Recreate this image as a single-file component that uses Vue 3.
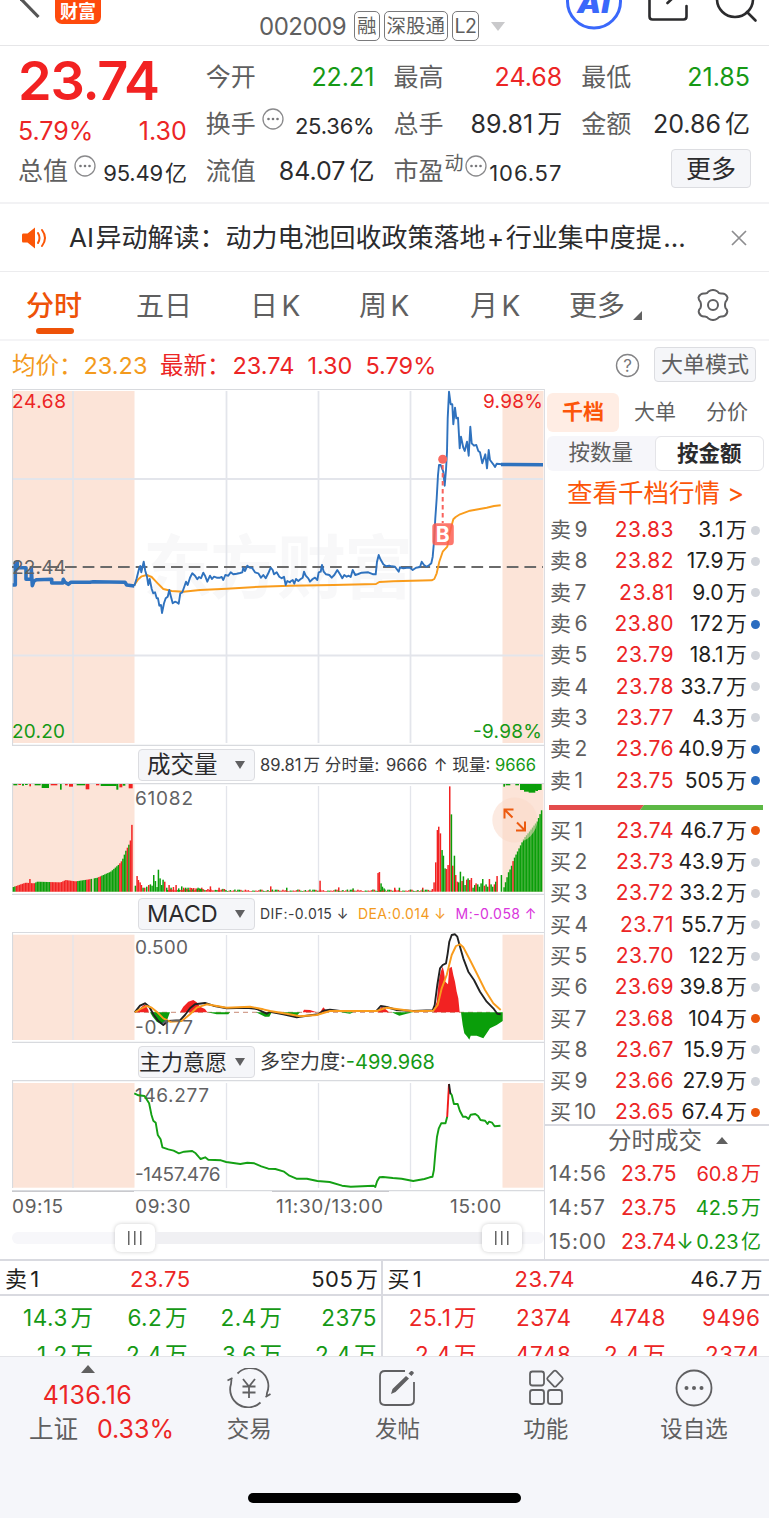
<template>
  <div class="app">
    <header class="top">
      <svg class="back" width="22" height="45" viewBox="20 0 22 45"><path d="M19 -3 L38.500 17" /></svg>
      <div class="logo">财富</div>
      <div class="code">
        <span class="num">002009</span>
        <i class="tag">融</i><i class="tag">深股通</i><i class="tag l2">L2</i>
        <svg width="14" height="9"><path d="M0 0H14L7 9Z" fill="#c9c9cb" /></svg>
      </div>
      <svg class="tools" width="206" height="45" viewBox="563 0 206 45">
        <circle cx="594" cy="1.5" r="26.5" stroke="#3a68fb" stroke-width="3" />
        <text x="577" y="12.500" class="ai" textLength="33" lengthAdjust="spacingAndGlyphs">AI</text>
        <path d="M649.500 -4V16.500Q649.500 19.500 652.500 19.500H683.500Q686.500 19.500 686.500 16.500V6M667.500 3L675 -4" />
        <circle cx="735" cy="-1" r="18" />
        <path d="M747 12L755.500 20.500" />
      </svg>
    </header>

    <section class="quote">
      <div class="first">
        <div class="price">23.74</div>
        <div class="pair chg"><span>5.79%</span><span>1.30</span></div>
        <div class="pair small-row">
          <span class="lab">总值<Dots class="sup" /></span><b class="sm"><Mix t="95.49亿" /></b>
        </div>
      </div>
      <div v-for="(c, i) in stats" :key="i" class="stat">
        <div v-for="s in c" :key="s.k" class="pair">
          <span class="lab">{{ s.k }}<em v-if="s.sup">{{ s.sup }}</em><Dots v-if="s.dots" class="sup" /></span>
          <b :class="[s.c, { sm: s.dots, pe: s.sup }]"><Mix :t="s.v" /></b>
        </div>
        <button v-if="i === 2" class="more">更多</button>
      </div>
    </section>

    <section class="news">
      <svg width="26" height="22" viewBox="0 0 26 22">
        <path d="M1 6.500H5.500L13 .5V21.500L5.500 15.500H1Q0 15.500 0 14V8Q0 6.500 1 6.500Z" fill="#fb5607" />
        <path d="M16 6Q19 11 16 16M20 3Q26 11 20 19" fill="none" stroke="#fb5607" stroke-width="2" stroke-linecap="round" />
      </svg>
      <p><Mix t="AI异动解读：动力电池回收政策落地+行业集中度提..." /></p>
      <svg class="x" width="16" height="16"><path d="M1 1L15 15M15 1L1 15" stroke="#8d8d8f" stroke-width="1.700" /></svg>
    </section>

    <nav class="tabs">
      <span class="on">分时</span><span>五日</span><span><Mix t="日K" /></span><span><Mix t="周K" /></span><span><Mix t="月K" /></span>
      <span>更多<svg width="9" height="9"><path d="M9 0V9H0Z" fill="#626262" /></svg></span>
      <svg class="gear" width="34" height="32" viewBox="-17 -16 34 32">
        <path d="M-4.500 -13.500Q-6 -11 -9 -11.500Q-13 -11.500 -14.500 -7.500Q-14.500 -5 -12.500 -3Q-11.500 0 -12.500 3Q-15 5 -14 8Q-12.500 11.500 -9 11.500Q-6 11 -4.500 13.500Q0 16.500 4.500 13.500Q6 11 9 11.500Q12.500 11.500 14 8Q15 5 12.500 3Q11.500 0 12.500 -3Q14.500 -5 14.500 -7.500Q13 -11.500 9 -11.500Q6 -11 4.500 -13.500Q0 -16.500 -4.500 -13.500Z" />
        <circle r="5" />
      </svg>
    </nav>

    <div class="latest">
      <span class="avg">均价：<b>23.23</b></span>
      <span class="last">最新：<b>23.74</b><b>1.30</b><b>5.79%</b></span>
      <svg width="25" height="25"><circle cx="12.500" cy="12.500" r="11" /><text x="12.500" y="18.500">?</text></svg>
      <button>大单模式</button>
    </div>

    <main class="main">
      <div class="left">
        <svg class="chart" width="532" height="357" viewBox="12 389 532 357">
          <text class="mark" x="143" y="593" textLength="270">东方财富</text>
          <rect class="shade" x="12" y="391" width="122.500" height="352" />
          <rect class="shade" x="502.500" y="391" width="41" height="352" />
          <path class="grid" d="M73 391V743M226.500 391V743M318.500 391V743M410.500 391V743M12 479H543M12 655.500H543" />
          <path class="edge" d="M12.500 388V746M12 389.300H544M12 745.300H544" />
          <path d="M12 567H543" stroke="#6a6a6a" stroke-width="2" stroke-dasharray="11.700 5.970" />
          <path class="ln orange" :d="avgLine" />
          <path class="ln blue thick" :d="preLine" />
          <path class="ln blue" :d="priceLine" />
          <path class="ln blue thick" d="M501 464.500L543 464.700" />
          <circle cx="442.700" cy="459.300" r="4.500" fill="#f96a61" />
          <path d="M442.700 465V523" stroke="#f8625c" stroke-width="2" stroke-dasharray="4.500 3.500" />
          <rect x="432.300" y="523.300" width="21.500" height="22" rx="3.500" fill="#fd5f53" opacity=".85" />
          <text x="435.700" y="541.500" class="flag">B</text>
          <text class="t red" x="12" y="408" textLength="54">24.68</text>
          <text class="t" x="12" y="574" textLength="54">22.44</text>
          <text class="t green" x="12" y="738" textLength="53">20.20</text>
          <text class="t red" x="483" y="408" textLength="60">9.98%</text>
          <text class="t green" x="473" y="738" textLength="69">-9.98%</text>
        </svg>

        <div class="bar">
          <button>成交量<i /></button>
          <p class="vol"><Mix t="89.81万 分时量: 9666 ↑ 现量: " /><b class="green">9666</b></p>
        </div>
        <svg class="chart" width="532" height="112" viewBox="12 783 532 112">
          <rect class="shade" x="12" y="784" width="122.500" height="108" />
          <rect class="shade" x="502.500" y="784" width="41" height="108" />
          <path class="grid thin" d="M73 784V892M226.500 786V892M318.500 786V892M410.500 786V892" />
          <path class="edge" d="M12.500 783V892M12 783.700H544M12 894.300H544" />
          <rect v-for="(b, i) in bars" :key="i" :x="b.x" :y="b.y" :width="b.w" :height="b.h" :fill="b.c" />
          <circle cx="514.800" cy="820" r="22.500" fill="#f9d9c8" opacity=".55" />
          <path d="M504.500 818.500V809.500H513.500M505 810L512.500 817.500M525 821.500V830.500H516M524.500 830L517 822.500" fill="none" stroke="#ec5a10" stroke-width="2" />
          <text class="t" x="135" y="805" textLength="58">61082</text>
        </svg>

        <div class="bar">
          <button>MACD<i /></button>
          <p class="macd"><span>DIF:-0.015 ↓</span><span class="or">DEA:0.014 ↓</span><span class="pu">M:-0.058 ↑</span></p>
        </div>
        <svg class="chart" width="532" height="111" viewBox="12 932 532 111">
          <rect class="shade" x="12" y="934.700" width="122.500" height="105.300" />
          <rect class="shade" x="502.500" y="934.700" width="41" height="105.300" />
          <path class="grid thin" d="M73 935V1040M226.500 935V1040M318.500 935V1040M410.500 935V1040" />
          <path class="edge" d="M12.500 932V1040M12 932.500H544M12 1042.300H544" />
          <path d="M135 1012.300H490" stroke="#a33a1a" stroke-width="1" stroke-dasharray="5 4" opacity=".6" />
          <path v-for="(a, i) in hist" :key="i" :d="a.d + 'Z'" :fill="a.c" />
          <path class="ln dark" :d="dif" />
          <path class="ln orange" :d="dea" />
          <text class="t" x="135" y="953.500" textLength="53">0.500</text>
          <text class="t" x="135" y="1033.500" textLength="58">-0.177</text>
        </svg>

        <div class="bar">
          <button class="wide">主力意愿<i /></button>
          <p class="force">多空力度:<b class="green">-499.968</b></p>
        </div>
        <svg class="chart" width="532" height="113" viewBox="12 1080 532 113">
          <rect class="shade" x="12" y="1083" width="122.500" height="104.700" />
          <rect class="shade" x="502.500" y="1083" width="41" height="104.700" />
          <path class="grid thin" d="M73 1083V1188M226.500 1083V1188M318.500 1083V1188M410.500 1083V1188" />
          <path class="edge" d="M12.500 1080V1188M12 1080.700H544M12 1190.700H544" />
          <path d="M12 1191.500H134M272 1191.500H389" stroke="#c9c9cd" />
          <text class="t" x="135" y="1102" textLength="74">146.277</text>
          <text class="t" x="135" y="1180.500" textLength="85.500">-1457.476</text>
          <path class="ln gr" :d="forceA" />
          <path class="ln gr" :d="forceB" />
          <path class="ln" d="M447.200 1117L449 1084" stroke="#f01a1a" />
          <path class="ln dark" d="M449 1084L450.400 1094" />
        </svg>
        <div class="times"><span>09:15</span><span>09:30</span><span>11:30/13:00</span><span>15:00</span></div>
        <div class="slider">
          <div class="track"><i class="knob" /><i class="rail" /><i class="knob" /></div>
        </div>
      </div>

      <aside class="right">
        <div class="modes"><span class="on">千档</span><span>大单</span><span>分价</span></div>
        <div class="seg"><span>按数量</span><span class="on">按金额</span></div>
        <a class="link">查看千档行情 &gt;</a>
        <div v-for="o in sells" :key="o[0]" class="order">
          <span><Mix :t="o[0]" /></span><b>{{ o[1] }}</b><em><Mix :t="o[2]" /></em><i :class="{ bl: o[3] }" />
        </div>
        <div class="ratio"><svg width="214" height="5"><path d="M0 0H95L91 5H0Z" fill="#e34c4c" /><path d="M95 0H214V5H91Z" fill="#5cb845" /></svg></div>
        <div v-for="o in buys" :key="o[0]" class="order">
          <span><Mix :t="o[0]" /></span><b>{{ o[1] }}</b><em><Mix :t="o[2]" /></em><i :class="{ og: o[3] }" />
        </div>
        <div class="deals">
          <h4>分时成交<svg width="12" height="7"><path d="M0 7H12L6 0Z" fill="#606060" /></svg></h4>
          <div v-for="d in deals" :key="d[0]" class="deal">
            <span>{{ d[0] }}</span><b>{{ d[1] }}<u v-if="d[4]">↓</u></b><em :class="d[3]"><Mix :t="d[2]" /></em>
          </div>
        </div>
      </aside>
    </main>

    <section class="queue">
      <div v-for="q in queues" :key="q.k" class="side">
        <div class="qh"><span><Mix :t="q.k" /></span><b>{{ q.p }}</b><em><Mix :t="q.v" /></em></div>
        <div v-for="(r, i) in q.rows" :key="i" class="qr" :class="q.c"><span v-for="(v, j) in r" :key="j"><Mix :t="v" /></span></div>
      </div>
    </section>

    <footer class="foot">
      <div class="index">
        <svg width="14" height="8"><path d="M0 8H14L7 0Z" fill="#606060" /></svg>
        <b>4136.16</b>
        <p>上证<b>0.33%</b></p>
      </div>
      <div class="item">
        <svg width="44" height="40" viewBox="-22 -20 44 40">
          <path d="M-11.500 -14.500A18 18 0 0 1 18 5L17.500 9M11.500 14.500A18 18 0 0 1 -18 -4L-17.500 -9M-21.500 -7.500L-16.500 -10M21.500 6L16.500 9" />
          <path d="M-6 -9L0 -1.500L6 -9M0 -1.500V10M-6.500 -1.500H6.500M-6.500 4.500H6.500" />
        </svg>
        <span>交易</span>
      </div>
      <div class="item">
        <svg width="44" height="40" viewBox="-22 -20 44 40">
          <path d="M8 -17H-12Q-17 -17 -17 -12V12Q-17 17 -12 17H12Q17 17 17 12V-6" />
          <path d="M-6 6L-4.500 1L9 -12L12 -9.500L-1.500 4ZM11.500 -14.500L14 -17Q16 -17.500 17 -15L14.500 -12Z" class="fill" />
        </svg>
        <span>发帖</span>
      </div>
      <div class="item">
        <svg width="44" height="40" viewBox="-22 -20 44 40">
          <rect x="-16" y="-16.500" width="14" height="14" rx="2.500" /><rect x="-16" y="2" width="14" height="14" rx="2.500" /><rect x="2" y="2" width="14" height="14" rx="2.500" />
          <path d="M7.700 -16.800Q9 -18 10.300 -16.800L16.300 -10.500Q17.300 -9.300 16.300 -8.200L10.300 -1.800Q9 -.8 7.700 -1.800L1.700 -8.200Q.7 -9.300 1.700 -10.500Z" />
        </svg>
        <span>功能</span>
      </div>
      <div class="item">
        <svg width="44" height="40" viewBox="-22 -20 44 40">
          <circle r="17.500" /><g class="dot"><circle cx="-7.500" r="2" /><circle r="2" /><circle cx="7.500" r="2" /></g>
        </svg>
        <span>设自选</span>
      </div>
      <div class="home" />
    </footer>
  </div>
</template>

<script setup>
import { h } from 'vue'

const RED = '#f22222'
const GREEN = '#0a9e0a'

// small circled ellipsis behind a label
const Dots = () =>
  h('svg', { width: 22, height: 22, viewBox: '-11 -11 22 22' }, [
    h('circle', { r: 10, fill: 'none', stroke: '#8a8a8c', 'stroke-width': 1.3 }),
    ...[-4.5, 0, 4.5].map((cx) => h('circle', { cx, r: 1.3, fill: '#77777a' })),
  ])

// mixed text with a little air between latin and chinese runs
const Mix = (props) =>
  h('span', { class: 'mix' }, props.t.match(/[\w.%+]+|[^\w.%+]+/g).map((s) => h('span', { class: 'run' }, s)))
Mix.props = ['t']

const stats = [
  [
    { k: '今开', v: '22.21', c: 'green' },
    { k: '换手', v: '25.36%', dots: true },
    { k: '流值', v: '84.07亿' },
  ],
  [
    { k: '最高', v: '24.68', c: 'red' },
    { k: '总手', v: '89.81万' },
    { k: '市盈', sup: '动', v: '106.57', dots: true },
  ],
  [
    { k: '最低', v: '21.85', c: 'green' },
    { k: '金额', v: '20.86亿' },
  ],
]

const sells = [
  ['卖9', '23.83', '3.1万'],
  ['卖8', '23.82', '17.9万'],
  ['卖7', '23.81', '9.0万'],
  ['卖6', '23.80', '172万', 1],
  ['卖5', '23.79', '18.1万'],
  ['卖4', '23.78', '33.7万'],
  ['卖3', '23.77', '4.3万'],
  ['卖2', '23.76', '40.9万', 1],
  ['卖1', '23.75', '505万', 1],
]
const buys = [
  ['买1', '23.74', '46.7万', 1],
  ['买2', '23.73', '43.9万'],
  ['买3', '23.72', '33.2万'],
  ['买4', '23.71', '55.7万'],
  ['买5', '23.70', '122万'],
  ['买6', '23.69', '39.8万'],
  ['买7', '23.68', '104万', 1],
  ['买8', '23.67', '15.9万'],
  ['买9', '23.66', '27.9万'],
  ['买10', '23.65', '67.4万', 1],
]
const deals = [
  ['14:56', '23.75', '60.8万', 'red'],
  ['14:57', '23.75', '42.5万', 'green'],
  ['15:00', '23.74', '0.23亿', 'green', true],
]
const queues = [
  { k: '卖1', p: '23.75', v: '505万', c: 'green', rows: [['14.3万', '6.2万', '2.4万', '2375'], ['1.2万', '2.4万', '3.6万', '2.4万']] },
  { k: '买1', p: '23.74', v: '46.7万', c: 'red', rows: [['25.1万', '2374', '4748', '9496'], ['2.4万', '4748', '2.4万', '2374']] },
]

// flat [x, y, x, y...] list -> svg path, scaled and shifted
const line = (p, ox, oy, sx = 3, cmd = 'M') => {
  let d = ''
  for (let i = 0; i < p.length; i += 2) {
    d += (i ? 'L' : cmd) + (ox + p[i] / sx).toFixed(1) + ' ' + (oy + p[i + 1] / 3).toFixed(1)
  }
  return d
}

const preLine = line([38, 600, 46, 600, 46, 532, 52, 532, 52, 548, 78, 548, 78, 583, 94, 583, 94, 550, 97, 602, 102, 588, 110, 584, 155, 583, 155, 594, 188, 594, 190, 583, 195, 592, 205, 598, 212, 592, 270, 592, 280, 590, 375, 592, 380, 600, 403, 603], 0, 385)

const priceLine =
  line([403, 603, 410, 580, 418, 548, 421, 543, 424, 562, 431, 530, 436, 558, 441, 575, 445, 600, 449, 582, 455, 612, 460, 625, 465, 622, 470, 640, 474, 640, 478, 662, 483, 660, 486, 684, 492, 655, 497, 640, 503, 635, 508, 615, 512, 632, 518, 655, 525, 650, 530, 652, 536, 656, 541, 625, 547, 622, 553, 605, 558, 590, 563, 600, 570, 578, 577, 565, 585, 572, 592, 583, 597, 576, 603, 580, 610, 563, 615, 572, 622, 590, 630, 572, 636, 582, 642, 575, 650, 578, 660, 578, 665, 576, 670, 585, 676, 570, 685, 572, 692, 562, 700, 568, 710, 566, 720, 564, 727, 562, 730, 548, 735, 558, 742, 542, 750, 548, 756, 548, 765, 562, 775, 565, 783, 578, 790, 570, 797, 580, 805, 565, 812, 548, 818, 555, 822, 568, 830, 562, 838, 575, 845, 580, 852, 575, 857, 600, 862, 588, 870, 592], 0, 385) +
  line([0, 590, 8, 585, 13, 596, 18, 582, 25, 588, 32, 582, 38, 578, 42, 560, 47, 572, 55, 580, 60, 590, 68, 582, 75, 578, 82, 585, 86, 562, 92, 560, 96, 540, 101, 560, 108, 568, 118, 570, 125, 578, 133, 570, 142, 555, 150, 568, 157, 580, 163, 570, 170, 575, 176, 572, 182, 576, 188, 555, 196, 570, 205, 567, 215, 563, 235, 562, 250, 568, 257, 568, 261, 530, 266, 510, 271, 522, 280, 538, 288, 544, 298, 542, 305, 544, 315, 545, 326, 560, 330, 547, 340, 550, 350, 548, 360, 548, 368, 555, 378, 548, 390, 546, 395, 530, 402, 540, 410, 545, 418, 540, 424, 535, 428, 515, 432, 470, 436, 400, 440, 340, 444, 270, 447, 240, 452, 240, 460, 260, 464, 302, 468, 255, 471, 200, 473, 100, 477, 20, 482, 58, 487, 58, 490, 118, 495, 68, 499, 100, 504, 98, 509, 190, 513, 155, 520, 188, 524, 198, 531, 170, 536, 212, 541, 125, 545, 175, 552, 182, 559, 180, 565, 198, 570, 202, 577, 235, 586, 208, 591, 250, 596, 195, 600, 225, 610, 238, 615, 246, 620, 236, 635, 238], 290, 385, 3, 'L')

const avgLine =
  line([403, 600, 415, 583, 425, 574, 440, 570, 455, 576, 470, 592, 490, 612, 515, 618, 550, 620, 600, 615, 680, 611, 780, 605, 870, 602], 0, 385) +
  line([0, 602, 130, 600, 258, 597, 268, 591, 310, 589, 425, 586, 433, 582, 440, 565, 448, 530, 458, 500, 472, 485, 480, 440, 490, 403, 497, 396, 510, 388, 540, 377, 590, 368, 612, 363, 632, 361], 290, 385, 3, 'L')

const dif =
  line([404, 802, 420, 782, 435, 775, 448, 785, 460, 808, 475, 828, 490, 840, 505, 828, 540, 826, 555, 810, 570, 790, 585, 778, 615, 774, 640, 782, 680, 790, 740, 788, 770, 792, 800, 806], 0, 745) +
  line([0, 800, 40, 808, 80, 817, 110, 812, 145, 808, 160, 797, 180, 794, 210, 798, 320, 797, 332, 783, 350, 786, 380, 795, 430, 798, 488, 796, 494, 780, 502, 720, 510, 670, 518, 660, 528, 655, 533, 625, 538, 590, 545, 570, 555, 568, 562, 575, 570, 605, 580, 640, 595, 680, 612, 705, 630, 740, 650, 770, 670, 790, 682, 806, 692, 808], 270, 745, 3, 'L')
const dea =
  line([404, 802, 425, 790, 440, 783, 455, 788, 470, 800, 490, 820, 510, 830, 545, 828, 570, 808, 590, 788, 620, 778, 680, 788, 750, 785, 790, 793], 0, 745) +
  line([0, 798, 50, 806, 90, 814, 140, 810, 180, 798, 320, 798, 350, 788, 385, 793, 430, 799, 490, 797, 503, 780, 515, 730, 530, 690, 545, 630, 558, 603, 570, 598, 580, 607, 600, 645, 620, 685, 645, 735, 670, 775, 692, 795], 270, 745, 3, 'L')

const hist = [
  [RED, 0, [410, 802, 418, 792, 425, 785, 435, 778, 445, 795, 446, 802]],
  [GREEN, 0, [450, 802, 458, 815, 470, 830, 485, 838, 500, 828, 510, 802]],
  [RED, 0, [540, 802, 550, 785, 565, 770, 580, 765, 590, 772, 600, 785, 615, 792, 622, 802]],
  [GREEN, 0, [622, 802, 650, 808, 685, 808, 690, 802]],
  [GREEN, 0, [768, 802, 795, 815, 808, 815, 815, 802]],
  [GREEN, 270, [30, 802, 80, 812, 90, 802]],
  [RED, 270, [98, 802, 102, 794, 120, 795, 140, 802]],
  [RED, 270, [150, 802, 160, 787, 172, 800]],
  [GREEN, 270, [210, 802, 240, 806, 250, 802]],
  [RED, 270, [322, 802, 335, 785, 350, 795, 357, 802]],
  [GREEN, 270, [365, 802, 388, 812, 410, 806, 430, 802]],
  [RED, 270, [490, 802, 500, 770, 506, 710, 512, 680, 518, 665, 522, 680, 526, 710, 534, 718, 538, 670, 545, 665, 550, 690, 555, 710, 560, 740, 565, 760, 569, 802]],
  [GREEN, 270, [573, 802, 578, 840, 583, 865, 592, 875, 598, 884, 602, 872, 620, 872, 640, 880, 650, 865, 660, 850, 680, 840, 698, 828, 698, 802]],
].map(([c, ox, p]) => ({ c, d: line(p, ox, 745) }))

const forceA = line([383, 160, 395, 166, 412, 168, 425, 190, 432, 225, 437, 242, 444, 248, 450, 285, 458, 298, 463, 322, 480, 328, 495, 332, 510, 340, 525, 335, 548, 333, 558, 340, 566, 350, 572, 357, 585, 352, 594, 359, 630, 361, 645, 366, 685, 372, 705, 368, 725, 370, 745, 379, 765, 386, 785, 387, 810, 395, 825, 407, 845, 416, 875, 416, 905, 423, 940, 426, 975, 437, 1000, 440, 1065, 437, 1070, 441, 1075, 424, 1082, 412, 1092, 411, 1120, 414, 1145, 416, 1178, 423, 1210, 417, 1225, 412, 1233, 410, 1237, 390, 1241, 340, 1246, 290, 1251, 265, 1258, 250, 1270, 250, 1275, 230], 0, 1040, 2.851)
const forceB = line([1284, 160, 1288, 165, 1294, 192, 1305, 192, 1311, 212, 1320, 230, 1328, 230, 1336, 237, 1342, 224, 1355, 222, 1363, 228, 1370, 240, 1383, 242, 1390, 252, 1394, 245, 1403, 248, 1410, 259, 1427, 257], 0, 1040, 2.851)

// volume bars
const bars = []
const bar = (x, hgt, c, ox = 0, w = 1.5) => bars.push({ x: ox + x / 3, y: 891.7 - hgt / 3, w, h: hgt / 3, c })
const hang = (x, w, hgt, c, ox = 0) => bars.push({ x: ox + x / 3, y: 784, w: w / 3, h: hgt / 3, c })
const at = (k, x) => {
  let i = 0
  while (i < k.length - 2 && k[i + 1][0] < x) i++
  const [a, b] = [k[i], k[i + 1]]
  return a[1] + ((b[1] - a[1]) * (x - a[0])) / (b[0] - a[0])
}

const pre = [[38, 14], [60, 22], [75, 27], [100, 25], [110, 30], [180, 28], [195, 35], [225, 31], [265, 37], [290, 42], [330, 60], [355, 82], [365, 95], [375, 122], [388, 148], [391, 165], [396, 236]]
const preColor = (x) => {
  const g = [[36, 45], [105, 147], [230, 256], [270, 291], [300, 354], [364, 377], [383, 387]]
  return g.some(([a, b]) => x >= a && x < b) ? GREEN : RED
}
for (let x = 38; x < 397; x += 4.5) {
  if (x > 272 && x < 277) continue
  bar(x, x > 86 && x < 92 ? 38 : at(pre, x), preColor(x))
}
const post = [[702, 20], [714, 60], [720, 70], [728, 95], [745, 130], [760, 160], [780, 185], [800, 212], [812, 243]]
for (let x = 700; x < 815; x += 4.5) bar(x, at(post, x), x > 724 && x < 730 ? RED : GREEN, 270)
bar(692, 50, GREEN, 270)

const g = GREEN
const r = RED
;[[404, 18, g], [409, 47, r], [413, 35, r], [418, 28, r], [422, 20, r], [427, 12, g], [432, 12, r], [438, 15, g], [444, 20, r], [449, 22, g], [454, 18, g], [459, 50, g], [464, 32, g], [469, 14, g], [473, 66, g], [478, 40, g], [483, 20, g], [487, 36, g], [492, 30, r], [498, 12, g], [505, 20, r], [511, 12, g], [518, 14, r], [526, 20, r], [534, 10, g], [543, 16, g], [549, 12, r], [555, 12, g], [562, 12, g], [568, 12, r], [573, 11, r], [579, 11, r], [586, 10, r], [592, 12, g], [597, 10, g], [603, 12, r], [629, 16, r], [655, 12, r], [810, 16, r]].forEach(([x, y, c]) => bar(x, y, c))
;[[48, 12, g], [148, 33, r], [204, 13, r], [247, 10, g], [322, 56, r], [326, 59, r], [331, 25, g], [335, 15, g], [340, 10, g], [372, 12, r], [386, 12, g], [456, 12, r], [485, 8, r], [490, 28, r], [495, 88, r], [500, 185, r], [504, 195, r], [509, 175, r], [514, 125, g], [518, 108, g], [523, 70, g], [527, 68, r], [532, 80, r], [537, 316, r], [542, 232, g], [546, 78, r], [551, 108, g], [555, 50, r], [560, 30, r], [564, 28, g], [569, 60, g], [574, 32, r], [578, 46, g], [583, 20, g], [588, 36, r], [592, 40, g], [597, 35, r], [602, 41, r], [607, 12, g], [612, 20, g], [616, 25, r], [621, 22, g], [626, 15, g], [631, 25, g], [636, 38, g], [641, 18, r], [646, 22, g], [651, 15, g], [656, 38, r], [661, 22, g], [666, 15, g], [671, 22, r], [675, 30, g], [679, 47, r]].forEach(([x, y, c]) => bar(x, y, c, 270))
// quiet stretch between the spikes
for (let x = 500, n = 7; x < 1295; x += 4.5) {
  n = (n * 37 + 11) % 101
  bar(x, (x < 680 ? 4 : 2) + (n % 11) * 0.5, n % 5 < 3 ? RED : GREEN)
}
;[[40, 12, 4, g], [55, 8, 3, r], [66, 6, 5, g], [75, 8, 3, g], [88, 5, 7, r], [104, 18, 4, g], [125, 22, 12, g], [152, 20, 4, r], [180, 5, 17, g], [195, 8, 4, r], [207, 12, 8, r], [230, 26, 4, g], [257, 11, 16, r], [288, 10, 4, r], [302, 48, 6, g], [349, 6, 17, g], [358, 9, 10, r], [368, 8, 5, g], [386, 12, 13, r]].forEach((a) => hang(...a))
;[[700, 5, 8, g], [707, 14, 4, g], [736, 11, 4, g], [750, 65, 18, g], [762, 22, 23, g], [776, 20, 26, g], [796, 8, 21, g]].forEach((a) => hang(...a, 270))
</script>

<style>
body {
  background: #fff;
}

.mix {
  white-space: pre;
}
.run + .run {
  margin-left: 0.12em;
}
</style>

<style scoped>
.app {
  width: 769px;
  height: 1518px;
  overflow: hidden;
  background: #fff;
  color: #5f5f60;
  font-family: Inter, "Noto Sans CJK SC", sans-serif;
}

b, em, i, u {
  font-weight: 400;
  font-style: normal;
  text-decoration: none;
}

p, h4 {
  margin: 0;
  font-weight: 400;
}

svg {
  display: block;
  flex: none;
}

button {
  font-family: inherit;
  background: #f5f6f9;
  border: 1px solid #dcdde1;
  border-radius: 4px;
  padding: 0;
}

.red { color: #ec2525; fill: #ec2525; }
.green { color: #159915; fill: #159915; }

/* header */
.top {
  display: flex;
  height: 45px;
  border-bottom: 1px solid #e6e6e8;
  padding-left: 20px;
}
.back {
  fill: none;
  stroke: #555;
  stroke-width: 3.2;
}
.logo {
  width: 46px;
  height: 24px;
  margin-left: 13px;
  border-radius: 0 0 7px 7px;
  background: #fe4a0c;
  color: #fff;
  font-size: 18px;
  font-weight: 700;
  line-height: 24px;
  text-align: center;
}
.code {
  display: flex;
  align-items: center;
  width: 304px;
  margin-left: 158px;
  padding-top: 7px;
  box-sizing: border-box;
  font-size: 24px;
}
.code .num {
  width: 95px;
  letter-spacing: -0.5px;
}
.tag {
  box-sizing: border-box;
  height: 30px;
  margin-right: 4px;
  padding: 0 2px;
  border: 1.5px solid #7a7a7c;
  border-radius: 5px;
  font-size: 19.5px;
  line-height: 28px;
}
.tag.l2 {
  margin-right: 12px;
  padding: 0 1.5px;
  letter-spacing: -0.5px;
}
.tools {
  fill: none;
  stroke: #2b2b2d;
  stroke-width: 2.6;
  stroke-linecap: round;
}
.ai {
  fill: #3a68fb;
  stroke: none;
  font-size: 27px;
  font-weight: 900;
  font-style: italic;
}

/* quote */
.quote {
  display: flex;
  gap: 19px;
  height: 158px;
  padding: 8px 19px 0 18px;
  box-sizing: border-box;
  border-bottom: 2px solid #f2f2f4;
  font-size: 25px;
}
.first,
.stat {
  width: 168.8px;
}
.pair {
  display: flex;
  align-items: center;
  justify-content: space-between;
  height: 47px;
  line-height: 47px;
  white-space: nowrap;
}
.pair b {
  color: #2b2b2d;
  font-size: 25px;
}
.pair b.red { color: #ec2525; }
.pair b.green { color: #159915; }
.pair b :deep(.run + .run) {
  margin-left: 4px;
}
.pair b.sm {
  font-size: 22px;
  padding-top: 4px;
  letter-spacing: -0.2px;
}
.pair b.sm :deep(.run + .run) {
  margin-left: 2px;
}
.pair b.pe {
  margin-left: -4px;
  letter-spacing: 0.9px;
}
.first .price {
  height: 54px;
  line-height: 54px;
  color: #f22222;
  font-size: 54px;
  font-weight: 600;
  letter-spacing: -1.2px;
}
.first .chg {
  height: 36px;
  line-height: 36px;
  padding-top: 5px;
  margin-bottom: -1px;
  color: #ec2525;
}
.lab {
  display: flex;
}
.lab em {
  margin-left: 1px;
  font-size: 19px;
  line-height: 32px;
}
.sup {
  margin: 7px 0 0 6px;
}
em + .sup {
  margin-left: 1px;
}
.more {
  display: block;
  width: 80px;
  height: 39px;
  margin: 1px -1px 0 auto;
  color: #2b2b2d;
  font-size: 25px;
  line-height: 36px;
}

/* news */
.news {
  display: flex;
  align-items: center;
  height: 68px;
  padding: 0 21px 0 22px;
  box-sizing: border-box;
  border-bottom: 1px solid #ececee;
}
.news p {
  width: 662px;
  margin-left: 21px;
  color: #2b2b2d;
  font-size: 26px;
  line-height: 60px;
  white-space: nowrap;
}
.news p :deep(.run + .run) {
  margin-left: 1.5px;
}

/* tabs */
.tabs {
  display: flex;
  height: 69px;
  box-sizing: border-box;
  border-bottom: 2px solid #f4f4f6;
  padding-left: 26px;
  font-size: 28px;
  line-height: 68px;
}
.tabs > span {
  display: flex;
  width: 110px;
}
.tabs > span:nth-child(2) { width: 114px; }
.tabs > span:nth-child(3) { width: 109px; }
.tabs > span:nth-child(4) { width: 111px; }
.tabs > span:nth-child(5) { width: 99px; }
.tabs > span:nth-child(6) { width: 127px; }
.tabs > span svg {
  margin: 39px 0 0 8px;
}
.tabs .on {
  color: #ee5208;
  font-weight: 500;
  flex-direction: column;
}
.tabs .on::after {
  content: '';
  width: 38px;
  height: 6px;
  margin: -12px 0 0 10px;
  border-radius: 3px;
  background: #ee5208;
}
.gear {
  margin-top: 17px;
  fill: none;
  stroke: #606062;
  stroke-width: 2;
}

.latest {
  display: flex;
  align-items: center;
  height: 48px;
  padding: 0 12px;
  font-size: 23.5px;
  white-space: nowrap;
}
.latest span {
  padding-bottom: 3px;
}
.latest .avg {
  width: 148px;
  color: #f39a1d;
}
.latest .last {
  width: 455px;
  color: #ec2525;
}
.latest b {
  margin-right: 13px;
}
.latest .avg b {
  margin-left: 1px;
}
.latest .last b:first-child {
  margin-left: 2px;
}
.latest svg circle {
  fill: none;
  stroke: #858587;
  stroke-width: 1.4;
}
.latest svg text {
  fill: #77777a;
  font-size: 17px;
  text-anchor: middle;
}
.latest button {
  width: 102px;
  height: 35px;
  margin: 0 0 1px 14px;
  color: #5f5f60;
  font-size: 22px;
  line-height: 31px;
}

/* charts */
.main {
  display: flex;
  height: 870px;
}
.left {
  width: 532px;
  padding-left: 12px;
  border-right: 1px solid #dcdde2;
}
.chart {
  fill: none;
}
.shade { fill: #fce4d8; }
.grid {
  stroke: #e3e5eb;
  stroke-width: 1.8;
}
.grid.thin { stroke-width: 1.3; }
.edge {
  stroke: #d8dade;
  stroke-width: 1.2;
}
.ln {
  stroke-width: 1.9;
  stroke-linejoin: round;
}
.blue { stroke: #2f72be; }
.thick { stroke-width: 3.6; }
.orange { stroke: #f99c1c; }
.dark { stroke: #222; }
.gr { stroke: #14a014; }
.t {
  fill: #626264;
  font-size: 19px;
}
.t.red { fill: #ec2525; }
.t.green { fill: #159915; }
.mark {
  fill: #f8f8f9;
  font-size: 69px;
  font-weight: 700;
}
.flag {
  fill: #fff;
  font-size: 21px;
  font-weight: 700;
}
.bar {
  display: flex;
  align-items: center;
  height: 37px;
  padding-left: 126px;
}
.bar button {
  display: flex;
  align-items: center;
  justify-content: space-between;
  width: 117px;
  height: 32px;
  padding: 0 9px 0 8px;
  color: #2b2b2d;
  font-size: 23.5px;
  line-height: 28px;
}
.bar button.wide {
  padding-left: 0;
  font-size: 22px;
}
.bar button i {
  border: 5px solid transparent;
  border-top: 8px solid #606062;
  border-bottom: 0;
}
.bar p {
  width: 284px;
  margin-left: 5px;
  color: #3a3a3c;
  white-space: nowrap;
}
.vol {
  font-size: 16.6px;
  line-height: 30px;
}
.macd {
  display: flex;
  justify-content: space-between;
  box-sizing: border-box;
  padding-right: 7px;
  font-size: 14px;
  letter-spacing: 0.45px;
}
.or { color: #f39a1d; }
.pu { color: #d935dc; }
.force {
  font-size: 20px;
  line-height: 30px;
}
.times {
  display: grid;
  grid-template-columns: 123px 141px 174px 1fr;
  height: 28px;
  font-size: 19px;
  line-height: 28px;
  letter-spacing: 0.65px;
}
.slider {
  padding-top: 5px;
}
.track {
  display: flex;
  align-items: center;
  height: 12px;
  margin-top: 6px;
  border-radius: 6px;
  background: #f7f7fa;
  padding-left: 103px;
}
.knob {
  width: 40px;
  height: 28px;
  border-radius: 6px;
  background:
    linear-gradient(#666, #666) 13px 7px / 1.5px 14px no-repeat,
    linear-gradient(#666, #666) 19px 7px / 1.5px 14px no-repeat,
    linear-gradient(#666, #666) 25px 7px / 1.5px 14px no-repeat,
    #fff;
  box-shadow: 0 0 4px rgba(0, 0, 0, 0.2);
}
.rail {
  width: 327px;
  height: 12px;
  background: #f0f0f3;
}

/* order book */
.right {
  width: 224px;
  color: #5f5f60;
}
.modes {
  display: flex;
  height: 39px;
  margin: 4px 0 0 2px;
  font-size: 21px;
  line-height: 38px;
  text-align: center;
}
.modes span { width: 72px; }
.modes .on {
  border-radius: 6px;
  background: #ffede4;
  color: #fc5509;
  font-weight: 700;
}
.seg {
  display: flex;
  width: 217px;
  height: 35px;
  margin: 4px 0 0 2px;
  border-radius: 6px;
  background: #f6f6fa;
  font-size: 21.5px;
  line-height: 33px;
  text-align: center;
}
.seg span {
  width: 108px;
}
.seg .on {
  border: 1px solid #e4e4e8;
  border-radius: 6px;
  background: #fff;
  color: #2b2b2d;
  font-weight: 700;
}
.link {
  display: block;
  height: 43px;
  padding-left: 22px;
  color: #fc5509;
  font-size: 25.5px;
  line-height: 44px;
}
.order {
  display: flex;
  align-items: center;
  height: 31.3px;
  box-sizing: border-box;
  padding: 1px 0 0 5px;
  font-size: 21px;
  line-height: 30px;
}
.order span { white-space: nowrap; }
.order > span {
  width: 50px;
}
.order > span :deep(.run + .run) {
  margin-left: 3.5px;
}
.order b {
  width: 74px;
  color: #ec2525;
  letter-spacing: 0.5px;
  text-align: right;
}
.order em {
  width: 73px;
  color: #1f1f21;
  text-align: right;
  white-space: nowrap;
}
.order i {
  width: 9px;
  height: 9px;
  margin-left: 4px;
  border-radius: 50%;
  background: #d2d5db;
}
.order i.bl { background: #2a6cc0; }
.order i.og { background: #ea560c; }
.ratio {
  height: 19px;
  padding: 9px 0 0 4px;
  box-sizing: border-box;
}
.deals {
  border-top: 2px solid #d9dae0;
  margin-top: -4px;
}
.deals h4 {
  display: flex;
  align-items: center;
  justify-content: center;
  gap: 14px;
  height: 30px;
  padding-left: 22px;
  font-size: 23.5px;
  line-height: 32px;
}
.deal {
  display: flex;
  height: 34.2px;
  padding-left: 4px;
  font-size: 21px;
  line-height: 36px;
}
.deal > span {
  width: 72px;
  letter-spacing: 0.8px;
}
.deal b {
  width: 70px;
  color: #ec2525;
  white-space: nowrap;
}
.deal u { color: #159915; }
.deal em {
  width: 70px;
  font-size: 20px;
  text-align: right;
  white-space: nowrap;
}

/* queue */
.queue {
  display: flex;
  height: 97px;
  overflow: hidden;
  border-top: 2px solid #d9dae0;
  box-sizing: border-box;
}
.side {
  width: 387px;
}
.side:first-child {
  width: 381px;
  border-right: 2px solid #d9dae0;
}
.qh {
  display: flex;
  height: 35px;
  box-sizing: border-box;
  border-bottom: 2px solid #d9dae0;
  padding: 0 2px 0 5px;
  color: #1f1f21;
  font-size: 22px;
  line-height: 37px;
  letter-spacing: 0.5px;
}
.side:last-child .qh {
  padding-right: 6px;
}
.qh > span { width: 125px; }
.side:last-child .qh > span { width: 127px; }
.qh b {
  flex: 1;
  color: #ec2525;
}
.qr {
  display: flex;
  height: 37px;
  font-size: 22.5px;
  letter-spacing: 0.5px;
  line-height: 43px;
}
.qr > span {
  width: 94.5px;
  text-align: right;
}
.side:first-child .qr { margin-left: -1px; }

/* bottom navigation */
.foot {
  display: flex;
  flex-wrap: wrap;
  align-content: flex-start;
  height: 162px;
  box-sizing: border-box;
  padding-top: 8px;
  border-top: 1px solid #e3e4e8;
  background: #f5f6fa;
  color: #5f5f60;
}
.index,
.item {
  display: flex;
  flex-direction: column;
  align-items: center;
  width: 148.3px;
  height: 128px;
}
.index {
  width: 175px;
}
.index b {
  color: #ec2525;
  font-size: 25px;
}
.index > b {
  margin-top: 7px;
  line-height: 30px;
  letter-spacing: 0.4px;
}
.index p {
  align-self: flex-start;
  display: flex;
  justify-content: space-between;
  width: 145px;
  margin: 1px 0 0 29px;
  font-size: 24.5px;
  line-height: 37px;
}
.item svg {
  margin-top: 3px;
  fill: none;
  stroke: #606062;
  stroke-width: 1.8;
}
.item .fill,
.item .dot {
  fill: #606062;
  stroke: none;
}
.item span {
  font-size: 22.5px;
  line-height: 42px;
}
.home {
  width: 273px;
  height: 10px;
  margin-left: 248px;
  border-radius: 5px;
  background: #000;
}
</style>
